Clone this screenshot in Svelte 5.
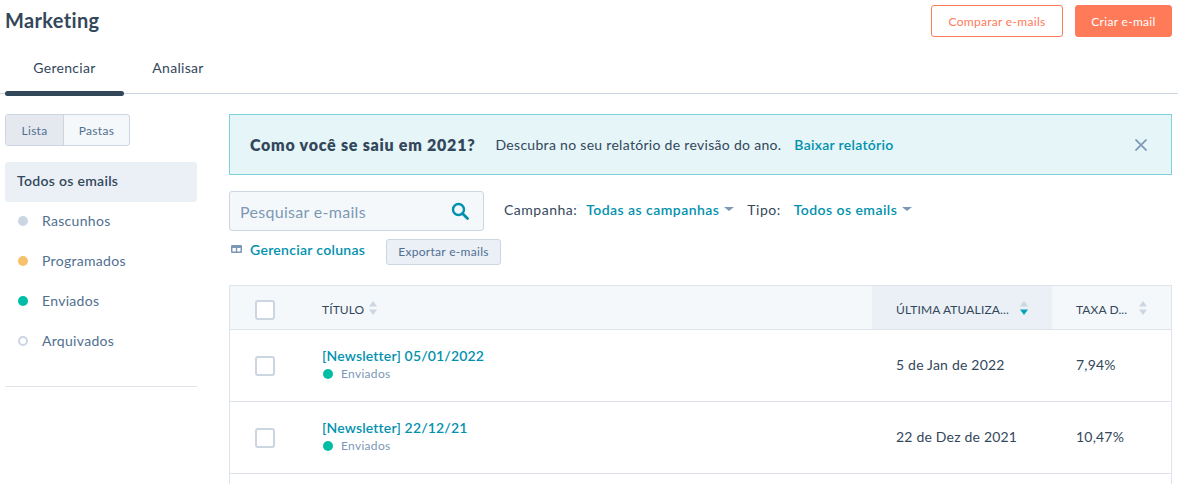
<script>
  const statuses = [
    { label: 'Rascunhos', cls: 'grey' },
    { label: 'Programados', cls: 'yellow' },
    { label: 'Enviados', cls: 'green' },
    { label: 'Arquivados', cls: 'hollow' }
  ];
  const rows = [
    { title: '[Newsletter] 05/01/2022', date: '5 de Jan de 2022', rate: '7,94%' },
    { title: '[Newsletter] 22/12/21', date: '22 de Dez de 2021', rate: '10,47%' }
  ];
</script>

{#snippet sorter(active)}
  <svg class="sorter" width="8" height="14" viewBox="0 0 8 14">
    <path d="M4 0 L8 5.5 H0 Z" fill="#cbd6e2" />
    <path d="M4 14 L8 8.5 H0 Z" fill={active ? '#00a4bd' : '#cbd6e2'} />
  </svg>
{/snippet}

<div class="page">
  <header class="top">
    <h1>Marketing</h1>
    <div class="actions">
      <button class="btn outline">Comparar e-mails</button>
      <button class="btn solid">Criar e-mail</button>
    </div>
  </header>

  <nav class="tabs">
    <span class="tab active">Gerenciar</span>
    <span class="tab">Analisar</span>
  </nav>

  <div class="body">
    <aside class="side">
      <div class="toggle">
        <span class="seg on">Lista</span>
        <span class="seg">Pastas</span>
      </div>
      <div class="all">Todos os emails</div>
      <ul class="status">
        {#each statuses as s}
          <li><i class="dot {s.cls}"></i>{s.label}</li>
        {/each}
      </ul>
    </aside>

    <main class="main">
      <div class="banner">
        <strong>Como você se saiu em 2021?</strong>
        <span class="desc">Descubra no seu relatório de revisão do ano.</span>
        <span class="blink">Baixar relatório</span>
        <svg class="close" width="12" height="12" viewBox="0 0 12 12">
          <path d="M0.5 0.5 L11.5 11.5 M11.5 0.5 L0.5 11.5" stroke="#7c98b6" stroke-width="1.7" fill="none" />
        </svg>
      </div>

      <div class="tools">
        <div class="left-tools">
          <div class="search">
            <span>Pesquisar e-mails</span>
            <svg width="18" height="18" viewBox="0 0 18 18">
              <circle cx="7.5" cy="7.5" r="5.5" stroke="#0091ae" stroke-width="2.4" fill="none" />
              <path d="M11.5 11.5 L16.5 16.5" stroke="#0091ae" stroke-width="2.8" stroke-linecap="round" />
            </svg>
          </div>
          <div class="manage">
            <span class="manage-link">
              <svg width="11" height="8" viewBox="0 0 11 8">
                <path fill-rule="evenodd" d="M1 0 H10 A1 1 0 0 1 11 1 V7 A1 1 0 0 1 10 8 H1 A1 1 0 0 1 0 7 V1 A1 1 0 0 1 1 0 Z M1.5 3 V6.5 H4.8 V3 Z M6.2 3 V6.5 H9.5 V3 Z" fill="#7c98b6" />
              </svg>
              Gerenciar colunas
            </span>
            <button class="export">Exportar e-mails</button>
          </div>
        </div>
        <div class="filters">
          <span class="flabel">Campanha:</span>
          <span class="fval">Todas as campanhas<i class="caret"></i></span>
          <span class="flabel tipo">Tipo:</span>
          <span class="fval">Todos os emails<i class="caret"></i></span>
        </div>
      </div>

      <div class="table">
        <div class="row head">
          <div class="c-check"><span class="box"></span></div>
          <div class="c-title"><span class="label">TÍTULO</span>{@render sorter(false)}</div>
          <div class="c-date sorted"><span class="label w-date">ÚLTIMA ATUALIZA...</span>{@render sorter(true)}</div>
          <div class="c-rate"><span class="label w-rate">TAXA D...</span>{@render sorter(false)}</div>
        </div>
        {#each rows as r}
          <div class="row item">
            <div class="c-check"><span class="box"></span></div>
            <div class="c-title stack">
              <span class="name">{r.title}</span>
              <span class="sent"><i class="dot green small"></i>Enviados</span>
            </div>
            <div class="c-date">{r.date}</div>
            <div class="c-rate">{r.rate}</div>
          </div>
        {/each}
        <div class="row item"></div>
      </div>
    </main>
  </div>
</div>

<style>
  :global(body) {
    margin: 0;
    background: #fff;
    overflow: hidden;
  }
  .page {
    width: 1178px;
    height: 484px;
    overflow: hidden;
    font-family: Lato, "Open Sans", sans-serif;
    color: #33475b;
    font-size: 14px;
    letter-spacing: 0.3px;
  }
  .top {
    display: flex;
    justify-content: space-between;
    align-items: flex-start;
    padding: 5px 6px 0 5px;
    height: 37px;
  }
  h1 {
    margin: 0;
    font-size: 20px;
    line-height: 30px;
    font-weight: 700;
    letter-spacing: 0.35px;
  }
  .actions {
    display: flex;
    gap: 12px;
  }
  .btn {
    height: 32px;
    border-radius: 3px;
    font: inherit;
    font-size: 12px;
    letter-spacing: 0.3px;
    padding: 0;
  }
  .outline {
    width: 132px;
    background: #fff;
    border: 1px solid #ff7a59;
    color: #ff7a59;
  }
  .solid {
    width: 97px;
    background: #ff7a59;
    border: 1px solid #ff7a59;
    color: #fff;
  }
  .tabs {
    display: flex;
    height: 51px;
    padding-left: 5px;
    border-bottom: 1px solid #cbd6e2;
  }
  .tab {
    position: relative;
    width: 119px;
    text-align: center;
    line-height: 52px;
  }
  .tab + .tab {
    width: 108px;
  }
  .tab.active::after {
    content: "";
    position: absolute;
    left: 0;
    right: 0;
    bottom: -3px;
    height: 5px;
    border-radius: 3px;
    background: #33475b;
  }
  .body {
    display: flex;
    padding: 20px 6px 0 5px;
    gap: 31px;
  }
  .side {
    width: 193px;
    flex: none;
  }
  .toggle {
    display: flex;
    width: 125px;
    height: 32px;
    box-sizing: border-box;
    border: 1px solid #cbd6e2;
    border-radius: 3px;
    background: #f5f8fa;
    font-size: 12px;
    color: #516f90;
    overflow: hidden;
  }
  .seg {
    display: flex;
    align-items: center;
    justify-content: center;
    flex: 1;
  }
  .seg.on {
    flex: none;
    width: 58px;
    box-sizing: border-box;
    background: #e5e8ef;
    border-right: 1px solid #cbd6e2;
  }
  .all {
    margin-top: 16px;
    height: 40px;
    width: 192px;
    line-height: 38px;
    padding-left: 12px;
    box-sizing: border-box;
    background: #eaf0f6;
    border-radius: 3px;
    font-weight: 600;
  }
  .status {
    list-style: none;
    width: 192px;
    margin: -1px 0 0;
    padding: 0 0 25px;
    border-bottom: 1px solid #dfe3eb;
  }
  .status li {
    height: 40px;
    display: flex;
    align-items: center;
    color: #516f90;
    padding-left: 13px;
    line-height: 18px;
  }
  .dot {
    width: 10px;
    height: 10px;
    border-radius: 50%;
    margin-right: 14px;
    flex: none;
    box-sizing: border-box;
  }
  .grey { background: #cbd6e2; }
  .yellow { background: #f5c26b; }
  .green { background: #00bda5; }
  .hollow { border: 2px solid #cbd6e2; }
  .main {
    width: 943px;
    flex: none;
  }
  .banner {
    display: flex;
    align-items: center;
    height: 61px;
    box-sizing: border-box;
    padding: 0 24px 0 20px;
    background: #e5f5f8;
    border: 1px solid #7fd1de;
  }
  .banner strong {
    font-size: 16px;
    letter-spacing: 0.75px;
    font-weight: 800;
  }
  .desc {
    margin-left: 20px;
  }
  .blink {
    margin-left: 13px;
    color: #0091ae;
    font-weight: 600;
  }
  .close {
    margin-left: auto;
  }
  .tools {
    display: flex;
    margin-top: 16px;
    height: 94px;
  }
  .left-tools {
    width: 272px;
    flex: none;
  }
  .search {
    width: 255px;
    height: 40px;
    box-sizing: border-box;
    display: flex;
    align-items: center;
    justify-content: space-between;
    padding: 0 14px 0 10px;
    background: #f5f8fa;
    border: 1px solid #cbd6e2;
    border-radius: 3px;
    color: #7c98b6;
    font-size: 16px;
  }
  .manage {
    display: flex;
    align-items: flex-start;
    margin-top: 8px;
  }
  .manage-link {
    display: flex;
    align-items: center;
    gap: 8px;
    width: 155px;
    height: 20px;
    padding-left: 2px;
    color: #0091ae;
    font-weight: 600;
    white-space: nowrap;
  }
  .export {
    width: 115px;
    height: 26px;
    padding: 0 0 2px;
    border: 1px solid #cbd6e2;
    border-radius: 3px;
    background: #eaf0f6;
    color: #506e91;
    font: inherit;
    font-size: 12px;
    letter-spacing: 0.3px;
  }
  .filters {
    display: flex;
    align-items: center;
    height: 36px;
    white-space: nowrap;
    margin-left: 3px;
    letter-spacing: 0.5px;
  }
  .flabel {
    margin-right: 9px;
  }
  .tipo {
    margin-left: 13px;
    margin-right: 13px;
  }
  .fval {
    color: #0091ae;
    font-weight: 600;
    display: inline-flex;
    align-items: center;
    letter-spacing: 0.45px;
  }
  .caret {
    width: 0;
    height: 0;
    margin-left: 5px;
    border-left: 5px solid transparent;
    border-right: 5px solid transparent;
    border-top: 4px solid #7c98b6;
  }
  .table {
    border: 1px solid #dfe3eb;
    border-bottom: 0;
  }
  .row {
    display: grid;
    grid-template-columns: 92px 550px 180px 1fr;
    border-bottom: 1px solid #dfe3eb;
    align-items: stretch;
  }
  .head {
    height: 44px;
    box-sizing: border-box;
    background: #f5f8fa;
    font-size: 12px;
  }
  .item {
    height: 72px;
    box-sizing: border-box;
  }
  .row > div {
    display: flex;
    align-items: center;
  }
  .c-check {
    padding-left: 25px;
  }
  .box {
    display: block;
    width: 20px;
    height: 20px;
    box-sizing: border-box;
    background: #fff;
    border: 2px solid #cbd6e2;
    border-radius: 3px;
  }
  .head .box {
    margin-top: 4px;
  }
  .head > div {
    gap: 5px;
    letter-spacing: 0.1px;
  }
  .label {
    padding-top: 3px;
  }
  .w-date {
    width: 119px;
    flex: none;
    white-space: nowrap;
    letter-spacing: 0.15px;
  }
  .w-rate {
    width: 58px;
    flex: none;
    white-space: nowrap;
  }
  .c-date,
  .c-rate {
    padding-left: 24px;
    white-space: nowrap;
  }
  .item .c-date,
  .item .c-rate {
    padding-bottom: 2px;
    box-sizing: border-box;
    letter-spacing: 0.2px;
  }
  .sorted {
    background: #eaf0f6;
  }
  .row > .stack {
    flex-direction: column;
    align-items: flex-start;
    justify-content: center;
    padding-bottom: 4px;
    box-sizing: border-box;
  }
  .name {
    color: #0091ae;
    font-weight: 600;
    line-height: 20px;
    letter-spacing: 0.17px;
  }
  .sent {
    display: flex;
    align-items: center;
    font-size: 12px;
    line-height: 15px;
    color: #7c98b6;
  }
  .dot.small {
    margin: 0 8px 0 1px;
  }
</style>
